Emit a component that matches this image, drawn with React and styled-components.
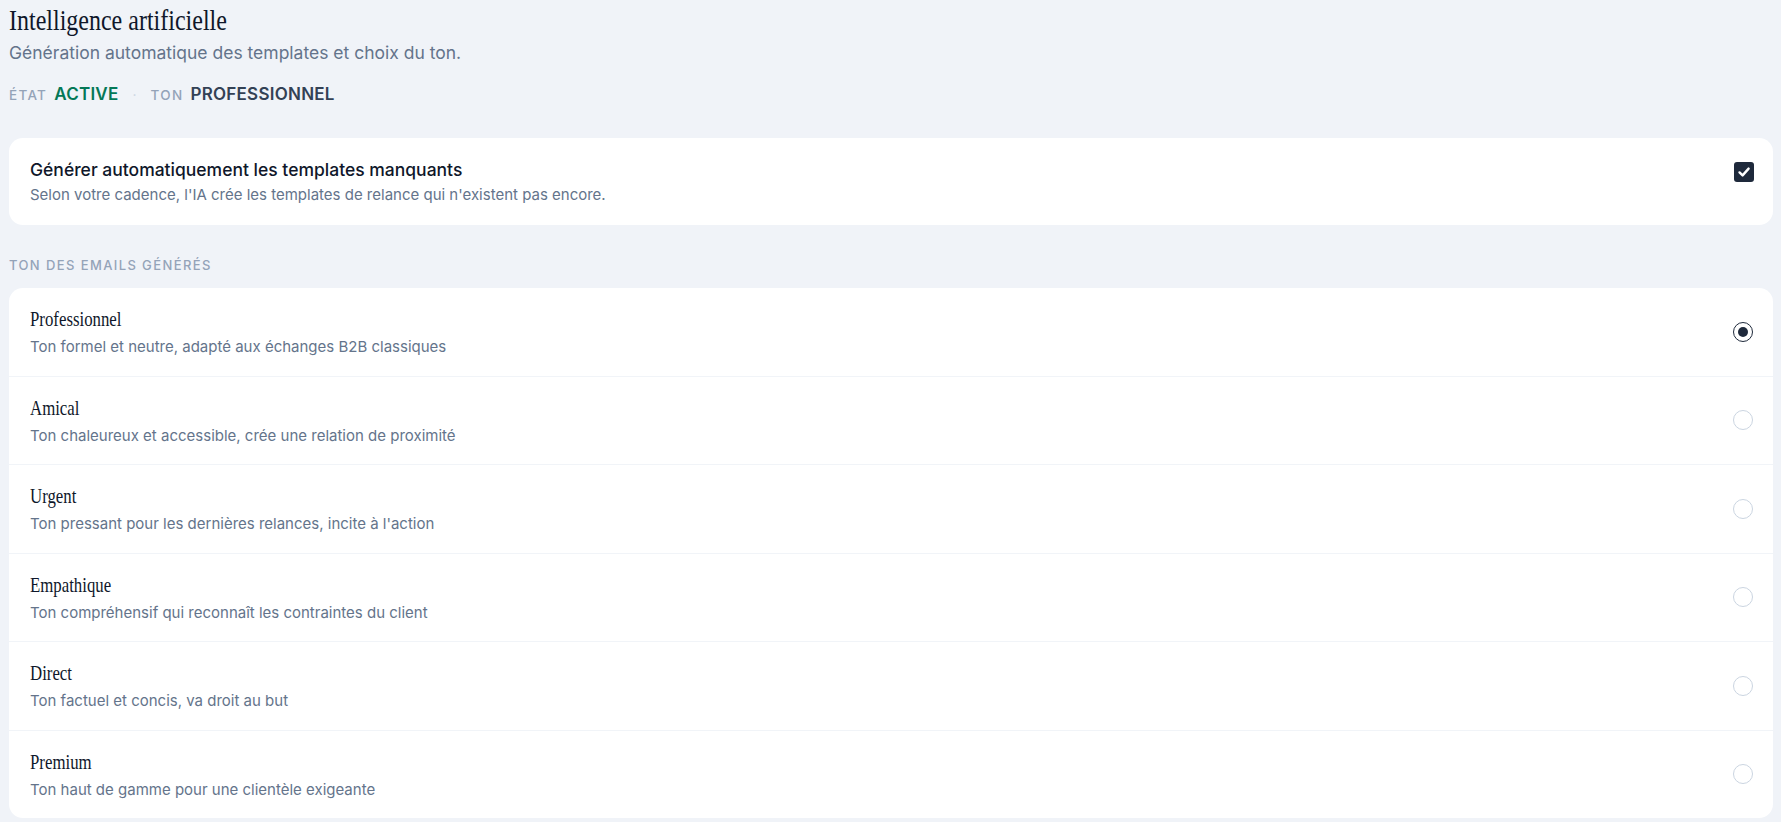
import React, { useState } from "react";
import styled, { createGlobalStyle } from "styled-components";

const GlobalStyle = createGlobalStyle`
  html, body {
    margin: 0;
    padding: 0;
    background: #f0f3f8;
  }
  body {
    font-family: Inter, "Noto Sans", "Liberation Sans", sans-serif;
    color: #0f172a;
    -webkit-font-smoothing: antialiased;
  }
`;

const Page = styled.main`
  padding: 2px 8px 8px 9px;
  display: flex;
  flex-direction: column;
`;

const Header = styled.header`
  display: flex;
  flex-direction: column;
`;

const Title = styled.h1`
  margin: 0;
  font-family: "Liberation Serif", "DejaVu Serif", serif;
  font-weight: 400;
  font-size: 30px;
  line-height: 36px;
  color: #0f172a;
`;

const Condensed = styled.span`
  display: inline-block;
  white-space: nowrap;
  transform: scaleX(${(p) => p.$scale || 0.8});
  transform-origin: left center;
`;

const Subtitle = styled.p`
  margin: 2px 0 0;
  font-size: 17.5px;
  line-height: 26px;
  color: #64748b;
`;

const StatusRow = styled.div`
  margin-top: 17px;
  display: flex;
  align-items: baseline;
  line-height: 22px;
`;

const StatusLabel = styled.span`
  font-size: 13.5px;
  font-weight: 500;
  letter-spacing: 1.3px;
  color: #94a3b8;
  margin-right: 7px;
`;

const StatusValue = styled.span`
  font-size: 17px;
  font-weight: 600;
  letter-spacing: 0.25px;
  color: ${(p) => p.$color};
`;

const Dot = styled.span`
  font-size: 14px;
  color: #cbd5e1;
  margin: 0 14px 0 14px;
`;

const Card = styled.section`
  background: #ffffff;
  border-radius: 14px;
  overflow: hidden;
`;

const ToggleCard = styled(Card)`
  margin-top: 32px;
  padding: 20px 19px 20px 21px;
  display: flex;
  align-items: flex-start;
  justify-content: space-between;
  gap: 24px;
`;

const ToggleText = styled.div`
  display: flex;
  flex-direction: column;
  gap: 3px;
`;

const ToggleTitle = styled.div`
  font-size: 17.5px;
  font-weight: 500;
  line-height: 24px;
  color: #0f172a;
`;

const ToggleDesc = styled.div`
  font-size: 15px;
  line-height: 20px;
  color: #64748b;
`;

const CheckBox = styled.button`
  margin-top: 4px;
  width: 20px;
  height: 20px;
  border: none;
  padding: 0;
  border-radius: 3px;
  background: ${(p) => (p.$checked ? "#1e293b" : "#ffffff")};
  box-shadow: ${(p) => (p.$checked ? "none" : "inset 0 0 0 1.5px #cbd5e1")};
  display: flex;
  align-items: center;
  justify-content: center;
  cursor: pointer;
  flex-shrink: 0;
`;

const SectionLabel = styled.h2`
  margin: 32px 0 14px;
  font-size: 13px;
  font-weight: 500;
  line-height: 17px;
  letter-spacing: 1.4px;
  color: #94a3b8;
  text-transform: uppercase;
`;

const OptionList = styled(Card)`
  display: flex;
  flex-direction: column;
`;

const OptionRow = styled.label`
  display: flex;
  align-items: center;
  justify-content: space-between;
  padding: 18px 20px 18.5px 21px;
  cursor: pointer;
  & + & {
    border-top: 1px solid #f1f4f8;
  }
`;

const OptionText = styled.div`
  display: flex;
  flex-direction: column;
  gap: 5px;
`;

const OptionTitle = styled.div`
  font-family: "Liberation Serif", "DejaVu Serif", serif;
  font-size: 21px;
  line-height: 26px;
  color: #0f172a;
`;

const OptionDesc = styled.div`
  font-size: 15px;
  line-height: 20px;
  color: #64748b;
`;

const Radio = styled.span`
  width: 20px;
  height: 20px;
  box-sizing: border-box;
  border-radius: 50%;
  border: ${(p) => (p.$selected ? "1.5px solid #1e293b" : "1px solid #cbd5e1")};
  display: flex;
  align-items: center;
  justify-content: center;
  flex-shrink: 0;
  &::after {
    content: "";
    width: 10px;
    height: 10px;
    border-radius: 50%;
    background: #1e293b;
    display: ${(p) => (p.$selected ? "block" : "none")};
  }
`;

const tones = [
  { id: "pro", title: "Professionnel", desc: "Ton formel et neutre, adapté aux échanges B2B classiques" },
  { id: "amical", title: "Amical", desc: "Ton chaleureux et accessible, crée une relation de proximité" },
  { id: "urgent", title: "Urgent", desc: "Ton pressant pour les dernières relances, incite à l'action" },
  { id: "empathique", title: "Empathique", desc: "Ton compréhensif qui reconnaît les contraintes du client" },
  { id: "direct", title: "Direct", desc: "Ton factuel et concis, va droit au but" },
  { id: "premium", title: "Premium", desc: "Ton haut de gamme pour une clientèle exigeante" },
];

export default function App() {
  const [auto, setAuto] = useState(true);
  const [tone, setTone] = useState("pro");

  return (
    <>
      <GlobalStyle />
      <Page>
        <Header>
          <Title>
            <Condensed $scale={0.8}>Intelligence artificielle</Condensed>
          </Title>
          <Subtitle>Génération automatique des templates et choix du ton.</Subtitle>
          <StatusRow>
            <StatusLabel>ÉTAT</StatusLabel>
            <StatusValue $color="#047857">ACTIVE</StatusValue>
            <Dot>·</Dot>
            <StatusLabel>TON</StatusLabel>
            <StatusValue $color="#334155">PROFESSIONNEL</StatusValue>
          </StatusRow>
        </Header>

        <ToggleCard>
          <ToggleText>
            <ToggleTitle>Générer automatiquement les templates manquants</ToggleTitle>
            <ToggleDesc>
              Selon votre cadence, l'IA crée les templates de relance qui n'existent pas encore.
            </ToggleDesc>
          </ToggleText>
          <CheckBox $checked={auto} onClick={() => setAuto(!auto)} aria-label="Activer">
            {auto && (
              <svg width="14" height="14" viewBox="0 0 14 14" fill="none">
                <path
                  d="M2.5 7.4 L5.6 10.4 L11.6 3.6"
                  stroke="#ffffff"
                  strokeWidth="2.4"
                  strokeLinecap="round"
                  strokeLinejoin="round"
                />
              </svg>
            )}
          </CheckBox>
        </ToggleCard>

        <SectionLabel>Ton des emails générés</SectionLabel>

        <OptionList>
          {tones.map((t) => (
            <OptionRow key={t.id} onClick={() => setTone(t.id)}>
              <OptionText>
                <OptionTitle>
                  <Condensed $scale={0.8}>{t.title}</Condensed>
                </OptionTitle>
                <OptionDesc>{t.desc}</OptionDesc>
              </OptionText>
              <Radio $selected={tone === t.id} />
            </OptionRow>
          ))}
        </OptionList>
      </Page>
    </>
  );
}
